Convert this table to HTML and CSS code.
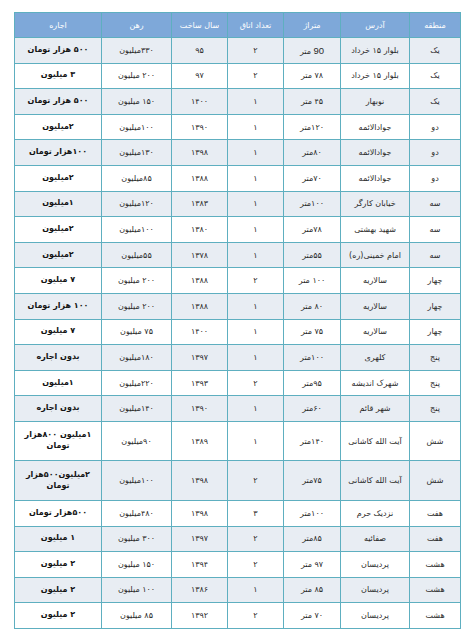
FILE: index.html
```html
<!DOCTYPE html>
<html lang="fa" dir="rtl">
<head>
<meta charset="utf-8">
<link rel="stylesheet" href="styles.css">
</head>
<body>
<div class="wrap">
<table class="grid">
<colgroup>
<col class="c-region"><col class="c-addr"><col class="c-area"><col class="c-rooms"><col class="c-year"><col class="c-dep"><col class="c-rent">
</colgroup>
<thead>
<tr><th>منطقه</th><th>آدرس</th><th>متراژ</th><th>تعداد اتاق</th><th>سال ساخت</th><th>رهن</th><th>اجاره</th></tr>
</thead>
<tbody>
<tr><td>یک</td><td>بلوار ۱۵ خرداد</td><td><span class="lat">90</span> متر</td><td>۲</td><td>۹۵</td><td>۳۳۰میلیون</td><td class="rent">۵۰۰ هزار  تومان</td></tr>
<tr><td>یک</td><td>بلوار ۱۵ خرداد</td><td>۷۸ متر</td><td>۲</td><td>۹۷</td><td>۲۰۰ میلیون</td><td class="rent">۳ میلیون</td></tr>
<tr><td>یک</td><td>نوبهار</td><td>۴۵ متر</td><td>۱</td><td>۱۴۰۰</td><td>۱۵۰ میلیون</td><td class="rent">۵۰۰ هزار تومان</td></tr>
<tr><td>دو</td><td>جوادالائمه</td><td>۱۲۰متر</td><td>۱</td><td>۱۳۹۰</td><td>۱۰۰میلیون</td><td class="rent">۲میلیون</td></tr>
<tr><td>دو</td><td>جوادالائمه</td><td>۸۰متر</td><td>۱</td><td>۱۳۹۸</td><td>۱۳۰میلیون</td><td class="rent">۱۰۰هزار تومان</td></tr>
<tr><td>دو</td><td>جوادالائمه</td><td>۷۰متر</td><td>۱</td><td>۱۳۸۸</td><td>۸۵میلیون</td><td class="rent">۲میلیون</td></tr>
<tr><td>سه</td><td>خیابان کارگر</td><td>۱۰۰متر</td><td>۱</td><td>۱۳۸۳</td><td>۱۲۰میلیون</td><td class="rent">۱میلیون</td></tr>
<tr><td>سه</td><td>شهید بهشتی</td><td>۷۸متر</td><td>۱</td><td>۱۳۸۰</td><td>۱۰۰میلیون</td><td class="rent">۲میلیون</td></tr>
<tr><td>سه</td><td>امام خمینی(ره)</td><td>۵۵متر</td><td>۱</td><td>۱۳۷۸</td><td>۵۵میلیون</td><td class="rent">۲میلیون</td></tr>
<tr><td>چهار</td><td>سالاریه</td><td>۱۰۰ متر</td><td>۲</td><td>۱۳۸۸</td><td>۲۰۰ میلیون</td><td class="rent">۷ میلیون</td></tr>
<tr><td>چهار</td><td>سالاریه</td><td>۸۰ متر</td><td>۱</td><td>۱۳۸۸</td><td>۲۰۰ میلیون</td><td class="rent">۱۰۰ هزار تومان</td></tr>
<tr><td>چهار</td><td>سالاریه</td><td>۷۵ متر</td><td>۱</td><td>۱۴۰۰</td><td>۷۵ میلیون</td><td class="rent">۷ میلیون</td></tr>
<tr><td>پنج</td><td>کلهری</td><td>۱۰۰متر</td><td>۱</td><td>۱۳۹۷</td><td>۱۸۰میلیون</td><td class="rent">بدون اجاره</td></tr>
<tr><td>پنج</td><td>شهرک اندیشه</td><td>۹۵متر</td><td>۲</td><td>۱۳۹۳</td><td>۲۲۰میلیون</td><td class="rent">۱میلیون</td></tr>
<tr><td>پنج</td><td>شهر قائم</td><td>۶۰متر</td><td>۱</td><td>۱۳۹۰</td><td>۱۴۰میلیون</td><td class="rent">بدون اجاره</td></tr>
<tr class="tall"><td>شش</td><td>آیت الله کاشانی</td><td>۱۴۰متر</td><td>۱</td><td>۱۳۸۹</td><td>۹۰میلیون</td><td class="rent">۱میلیون ۸۰۰هزار<br>تومان</td></tr>
<tr class="tall"><td>شش</td><td>آیت الله کاشانی</td><td>۷۵متر</td><td>۲</td><td>۱۳۹۸</td><td>۱۰۰میلیون</td><td class="rent">۲میلیون۵۰۰هزار<br>تومان</td></tr>
<tr><td>هفت</td><td>نزدیک حرم</td><td>۱۰۰متر</td><td>۳</td><td>۱۳۹۸</td><td>۴۸۰میلیون</td><td class="rent">۵۰۰هزار تومان</td></tr>
<tr><td>هفت</td><td>صفائیه</td><td>۸۵متر</td><td>۲</td><td>۱۳۹۷</td><td>۳۰۰ میلیون</td><td class="rent">۱ میلیون</td></tr>
<tr><td>هشت</td><td>پردیسان</td><td>۹۷ متر</td><td>۲</td><td>۱۳۹۴</td><td>۱۵۰ میلیون</td><td class="rent">۲ میلیون</td></tr>
<tr><td>هشت</td><td>پردیسان</td><td>۸۵ متر</td><td>۱</td><td>۱۳۸۶</td><td>۱۰۰ میلیون</td><td class="rent">۲ میلیون</td></tr>
<tr><td>هشت</td><td>پردیسان</td><td>۷۰ متر</td><td>۲</td><td>۱۳۹۲</td><td>۸۵ میلیون</td><td class="rent">۲ میلیون</td></tr>
</tbody>
</table>
</div>
</body>
</html>
```
FILE: styles.css
```css
html, body {
  margin: 0;
  padding: 0;
  background: #ffffff;
}
.wrap {
  padding: 12px 10px 0 15px;
}
.grid {
  width: 446px;
  border-collapse: collapse;
  table-layout: fixed;
  font-family: "DejaVu Sans", "Noto Sans", sans-serif;
  font-size: 8px;
  color: #2a2a2a;
  direction: rtl;
}
.c-region { width: 51px; }
.c-addr { width: 69px; }
.c-area { width: 57px; }
.c-rooms { width: 56px; }
.c-year { width: 56px; }
.c-dep { width: 70px; }
.c-rent { width: 87px; }
.grid th, .grid td {
  border: 1px solid #5eafc0;
  text-align: center;
  vertical-align: middle;
  padding: 0 2px;
  white-space: nowrap;
}
.grid th {
  background: #7ea8d9;
  color: #ffffff;
  font-weight: normal;
  height: 24px;
}
.grid tbody tr {
  height: 25.6px;
}
.grid tbody tr:nth-child(odd) {
  background: #e8edf3;
}
.grid tbody tr.tall {
  height: 39.5px;
}
.grid td.rent {
  font-weight: bold;
  font-size: 8px;
  color: #151515;
  line-height: 1.35;
}
.lat {
  font-family: "Liberation Sans", sans-serif;
  font-size: 9.5px;
}
```
